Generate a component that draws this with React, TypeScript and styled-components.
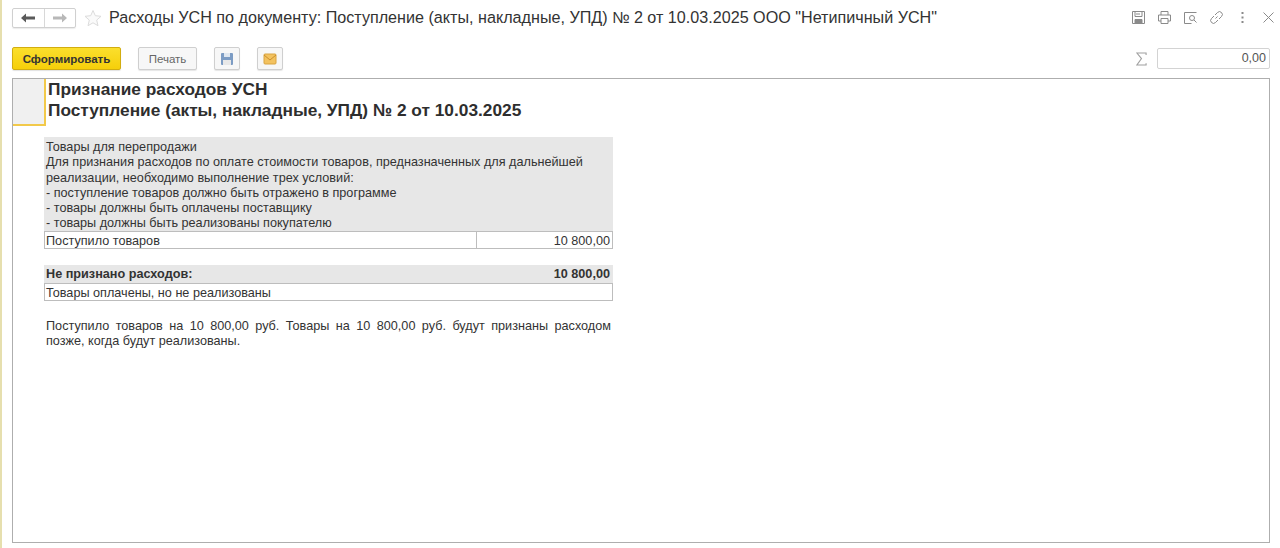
import React from 'react';
import styled, { createGlobalStyle } from 'styled-components';

const GlobalStyle = createGlobalStyle`
  html, body {
    margin: 0;
    padding: 0;
    background: #fff;
    overflow: hidden;
  }
  body {
    font-family: "Liberation Sans", Arial, sans-serif;
    color: #333;
  }
`;

const Page = styled.div`
  width: 1280px;
  height: 548px;
  box-sizing: border-box;
  display: flex;
  flex-direction: column;
  padding: 7px 10px 5px 12px;
  background: linear-gradient(to right, #e6dfae 0, #e6dfae 2px, #fff 2px);
`;

const Header = styled.div`
  height: 21px;
  display: flex;
  align-items: center;
`;

const NavGroup = styled.div`
  display: flex;
  width: 64px;
  height: 20px;
  box-sizing: border-box;
  border: 1px solid #d0d0d0;
  border-radius: 2px;
  box-shadow: 0 1px 1px rgba(0, 0, 0, 0.08);
`;

const NavButton = styled.div<{ $muted?: boolean }>`
  flex: 1;
  display: flex;
  align-items: center;
  justify-content: center;
  color: ${({ $muted }) => ($muted ? '#b8b8b8' : '#5a5a5a')};
  & + & {
    border-left: 1px solid #d8d8d8;
  }
`;

const FavIcon = styled.div`
  margin-left: 8px;
  width: 18px;
  height: 18px;
  display: flex;
`;

const Title = styled.div`
  margin-left: 7px;
  font-size: 16.15px;
  color: #333;
  white-space: nowrap;
  flex: 1;
`;

const HeaderTools = styled.div`
  display: flex;
  align-items: center;
  gap: 11px;
  margin-right: -6px;
  color: #8a8a8a;
`;

const CommandBar = styled.div`
  margin-top: 19px;
  height: 23px;
  display: flex;
  align-items: center;
`;

const PrimaryButton = styled.div`
  width: 109px;
  height: 23px;
  box-sizing: border-box;
  background: linear-gradient(#fbdf2d, #f6cf0a);
  border: 1px solid #d2ad10;
  border-radius: 2px;
  font-size: 11.5px;
  font-weight: bold;
  color: #333;
  display: flex;
  align-items: center;
  justify-content: center;
  box-shadow: 0 1px 1px rgba(0, 0, 0, 0.12);
`;

const PlainButton = styled.div<{ $width: number; $gap: number }>`
  width: ${({ $width }) => $width}px;
  margin-left: ${({ $gap }) => $gap}px;
  height: 23px;
  box-sizing: border-box;
  background: #f7f7f7;
  border: 1px solid #cfcfcf;
  border-radius: 2px;
  font-size: 11.5px;
  color: #666;
  display: flex;
  align-items: center;
  justify-content: center;
  box-shadow: 0 1px 1px rgba(0, 0, 0, 0.1);
`;

const SumArea = styled.div`
  margin-left: auto;
  display: flex;
  align-items: center;
  color: #a0a0a0;
`;

const SumField = styled.div`
  margin-left: 10px;
  width: 113px;
  height: 21px;
  box-sizing: border-box;
  border: 1px solid #d3d3d3;
  border-radius: 2px;
  font-size: 12.5px;
  color: #555;
  text-align: right;
  line-height: 18px;
  padding-right: 3px;
`;

const Report = styled.div`
  margin-top: 8px;
  flex: 1;
  border: 1px solid #aeaeae;
  display: flex;
  flex-direction: column;
`;

const ReportHead = styled.div`
  display: flex;
`;

const CornerCell = styled.div`
  width: 31px;
  height: 45px;
  background: #f0f0f0;
  border-right: 2px solid #f2c94a;
  border-bottom: 2px solid #f2c94a;
`;

const ReportTitle = styled.div`
  margin-left: 2px;
  font-size: 17.3px;
  line-height: 20.5px;
  font-weight: bold;
  color: #2e2e2e;
  white-space: nowrap;
`;

const Body = styled.div`
  margin: 11px 0 0 31px;
  width: 569px;
  font-size: 12.67px;
  color: #333;
`;

const Note = styled.div`
  background: #e7e7e7;
  padding: 3px 2px 0;
  line-height: 15.3px;
  height: 94px;
  box-sizing: border-box;
`;

const Row = styled.div`
  display: flex;
  height: 18px;
  box-sizing: border-box;
  border: 1px solid #bdbdbd;
  line-height: 18px;
`;

const Cell = styled.div<{ $right?: boolean }>`
  padding: 0 1px;
  box-sizing: border-box;
  ${({ $right }) =>
    $right
      ? 'width: 136px; padding-right: 2px; text-align: right; border-left: 1px solid #bdbdbd;'
      : 'flex: 1;'}
`;

const TotalRow = styled.div`
  margin-top: 16px;
  height: 18px;
  box-sizing: border-box;
  background: #e7e7e7;
  padding: 0 3px 0 2px;
  display: flex;
  justify-content: space-between;
  font-weight: bold;
  line-height: 19px;
`;

const Summary = styled.div`
  margin-top: 18px;
  padding: 0 2px;
  line-height: 15.3px;
  text-align: justify;
`;

export default function App(): JSX.Element {
  return (
    <Page>
      <GlobalStyle />
      <Header>
        <NavGroup>
          <NavButton>
            <svg width="14" height="10" viewBox="0 0 14 10" fill="currentColor">
              <path d="M0 5l5-4.5v3h9v3H5v3z" />
            </svg>
          </NavButton>
          <NavButton $muted>
            <svg width="14" height="10" viewBox="0 0 14 10" fill="currentColor">
              <path d="M14 5L9 .5v3H0v3h9v3z" />
            </svg>
          </NavButton>
        </NavGroup>
        <FavIcon>
          <svg width="18" height="18" viewBox="0 0 18 18" fill="#fafafa" stroke="#dcdcdc">
            <path d="M9 1.5l2.3 5.2 5.7.6-4.3 3.8 1.3 5.6L9 13.8l-5 2.9 1.3-5.6L1 7.3l5.7-.6z" />
          </svg>
        </FavIcon>
        <Title>Расходы УСН по документу: Поступление (акты, накладные, УПД) № 2 от 10.03.2025 ООО "Нетипичный УСН"</Title>
        <HeaderTools>
          <svg width="15" height="15" viewBox="0 0 15 15" fill="none" stroke="currentColor">
            <path d="M1.5 1.5h12v12h-12z" />
            <path d="M4 1.5v5h7v-5M6 3v2M8 3v2" />
            <path d="M4 13.5v-4h7v4z" fill="currentColor" />
          </svg>
          <svg width="15" height="15" viewBox="0 0 15 15" fill="none" stroke="currentColor">
            <path d="M4 5V1.5h7V5M4 11H1.5V5h12v6H11" />
            <path d="M4 8.5h7v5H4z" />
          </svg>
          <svg width="15" height="15" viewBox="0 0 15 15" fill="none" stroke="currentColor">
            <path d="M13.5 2.5h-12v11h7" />
            <circle cx="9" cy="8" r="2.5" />
            <path d="M11 10l2.5 2.5" />
          </svg>
          <svg width="15" height="15" viewBox="0 0 15 15" fill="none" stroke="currentColor">
            <path d="M6.5 8.5l2-2" />
            <path d="M6 5l2.5-2.5a2.5 2.5 0 0 1 4 4L10 9" />
            <path d="M9 10l-2.5 2.5a2.5 2.5 0 0 1-4-4L5 6" />
          </svg>
          <svg width="15" height="15" viewBox="0 0 15 15" fill="currentColor">
            <rect x="6.5" y="2" width="2" height="2" />
            <rect x="6.5" y="6.5" width="2" height="2" />
            <rect x="6.5" y="11" width="2" height="2" />
          </svg>
          <svg width="15" height="15" viewBox="0 0 15 15" fill="none" stroke="currentColor">
            <path d="M2.5 2.5l10 10M12.5 2.5l-10 10" />
          </svg>
        </HeaderTools>
      </Header>
      <CommandBar>
        <PrimaryButton>Сформировать</PrimaryButton>
        <PlainButton $width={59} $gap={17}>Печать</PlainButton>
        <PlainButton $width={26} $gap={17}>
          <svg width="14" height="14" viewBox="0 0 14 14">
            <rect x="1" y="1" width="12" height="12" rx="1" fill="#7c9cc4" />
            <rect x="4" y="1" width="6" height="4" fill="#dfe7f0" />
            <rect x="3" y="8" width="8" height="5" fill="#e8e8e8" />
          </svg>
        </PlainButton>
        <PlainButton $width={26} $gap={17}>
          <svg width="14" height="12" viewBox="0 0 14 12">
            <rect x="1" y="1" width="12" height="10" rx="1" fill="#f3c25f" stroke="#d9a441" />
            <path d="M1 2l6 5 6-5" fill="none" stroke="#c98f2d" />
          </svg>
        </PlainButton>
        <SumArea>
          <svg width="11" height="14" viewBox="0 0 12 15" fill="none" stroke="currentColor" strokeWidth="1.2">
            <path d="M11 3V1H1l5 6-5 7h10v-2" />
          </svg>
          <SumField>0,00</SumField>
        </SumArea>
      </CommandBar>
      <Report>
        <ReportHead>
          <CornerCell />
          <ReportTitle>
            Признание расходов УСН
            <br />
            Поступление (акты, накладные, УПД) № 2 от 10.03.2025
          </ReportTitle>
        </ReportHead>
        <Body>
          <Note>
            Товары для перепродажи
            <br />
            Для признания расходов по оплате стоимости товаров, предназначенных для дальнейшей
            <br />
            реализации, необходимо выполнение трех условий:
            <br />- поступление товаров должно быть отражено в программе
            <br />- товары должны быть оплачены поставщику
            <br />- товары должны быть реализованы покупателю
          </Note>
          <Row>
            <Cell>Поступило товаров</Cell>
            <Cell $right>10 800,00</Cell>
          </Row>
          <TotalRow>
            <span>Не признано расходов:</span>
            <span>10 800,00</span>
          </TotalRow>
          <Row>
            <Cell>Товары оплачены, но не реализованы</Cell>
          </Row>
          <Summary>
            Поступило товаров на 10 800,00 руб. Товары на 10 800,00 руб. будут признаны расходом позже, когда будут реализованы.
          </Summary>
        </Body>
      </Report>
    </Page>
  );
}
